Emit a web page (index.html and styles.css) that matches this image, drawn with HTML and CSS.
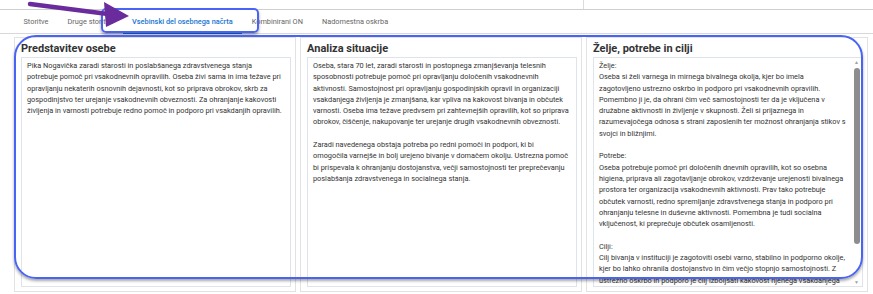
FILE: index.html
```html
<!DOCTYPE html>
<html lang="sl">
  <head>
    <meta charset="UTF-8" />
    <title>Osebni načrt</title>
    <link rel="stylesheet" href="styles.css">
  </head>
  <body>
    <div class="top-strip">
      <div class="cell"></div>
      <div class="cell"></div>
    </div>

    <!-- zavihki -->
    <nav class="tabs">
      <span class="tab">Storitve</span>
      <span class="tab">Druge storitve</span>
      <span class="tab active">Vsebinski del osebnega načrta</span>
      <span class="tab">Kombinirani ON</span>
      <span class="tab">Nadomestna oskrba</span>
    </nav>

    <main class="panels">
      <section class="card">
        <h2>Predstavitev osebe</h2>
        <div class="box">
          <div class="text">Pika Nogavička zaradi starosti in poslabšanega zdravstvenega stanja potrebuje pomoč pri vsakodnevnih opravilih. Oseba živi sama in ima težave pri opravljanju nekaterih osnovnih dejavnosti, kot so priprava obrokov, skrb za gospodinjstvo ter urejanje vsakodnevnih obveznosti. Za ohranjanje kakovosti življenja in varnosti potrebuje redno pomoč in podporo pri vsakdanjih opravilih.</div>
        </div>
      </section>

      <section class="card">
        <h2>Analiza situacije</h2>
        <div class="box">
          <div class="text">Oseba, stara 70 let, zaradi starosti in postopnega zmanjševanja telesnih sposobnosti potrebuje pomoč pri opravljanju določenih vsakodnevnih aktivnosti. Samostojnost pri opravljanju gospodinjskih opravil in organizaciji vsakdanjega življenja je zmanjšana, kar vpliva na kakovost bivanja in občutek varnosti. Oseba ima težave predvsem pri zahtevnejših opravilih, kot so priprava obrokov, čiščenje, nakupovanje ter urejanje drugih vsakodnevnih obveznosti.

Zaradi navedenega obstaja potreba po redni pomoči in podpori, ki bi omogočila varnejše in bolj urejeno bivanje v domačem okolju. Ustrezna pomoč bi prispevala k ohranjanju dostojanstva, večji samostojnosti ter preprečevanju poslabšanja zdravstvenega in socialnega stanja.</div>
        </div>
      </section>

      <section class="card">
        <h2>Želje, potrebe in cilji</h2>
        <div class="box scroll">
          <div class="text">Želje:
Oseba si želi varnega in mirnega bivalnega okolja, kjer bo imela zagotovljeno ustrezno oskrbo in podporo pri vsakodnevnih opravilih. Pomembno ji je, da ohrani čim več samostojnosti ter da je vključena v družabne aktivnosti in življenje v skupnosti. Želi si prijaznega in razumevajočega odnosa s strani zaposlenih ter možnost ohranjanja stikov s svojci in bližnjimi.

Potrebe:
Oseba potrebuje pomoč pri določenih dnevnih opravilih, kot so osebna higiena, priprava ali zagotavljanje obrokov, vzdrževanje urejenosti bivalnega prostora ter organizacija vsakodnevnih aktivnosti. Prav tako potrebuje občutek varnosti, redno spremljanje zdravstvenega stanja in podporo pri ohranjanju telesne in duševne aktivnosti. Pomembna je tudi socialna vključenost, ki preprečuje občutek osamljenosti.

Cilji:
Cilj bivanja v instituciji je zagotoviti osebi varno, stabilno in podporno okolje, kjer bo lahko ohranila dostojanstvo in čim večjo stopnjo samostojnosti. Z ustrezno oskrbo in podporo je cilj izboljšati kakovost njenega vsakdanjega življenja ter ji omogočiti varno in prijetno bivanje.</div>
          <div class="scrollbar">
            <span class="arrow-btn">&#9650;</span>
            <span class="thumb"></span>
            <span class="arrow-btn">&#9660;</span>
          </div>
        </div>
      </section>
    </main>

    <!-- oznake na zaslonski sliki -->
    <div class="mark mark-tab"></div>
    <div class="mark mark-panels"></div>
    <svg class="pointer" width="140" height="32" viewBox="0 0 140 32">
      <line x1="30" y1="4" x2="108" y2="14" stroke="#6a2c9c" stroke-width="4.5" stroke-linecap="round"/>
      <polygon points="104,2 129,16 106,27" fill="#6a2c9c"/>
    </svg>
  </body>
</html>
```

FILE: styles.css
```css
body {
  font-family: Roboto, "Liberation Sans", sans-serif;
  background-color: #fff;
  color: #333;
  margin: 0;
  padding: 0;
  overflow: hidden;
}

/* ----------- vrstica na vrhu ----------- */
.top-strip {
  display: grid;
  grid-template-columns: 583px 1fr;
  height: 9px;
  border-bottom: 1px solid #cfcfcf;
}
.top-strip .cell + .cell {
  border-left: 1px solid #dcdcdc;
}

/* ----------- zavihki ----------- */
.tabs {
  display: flex;
  align-items: stretch;
  height: 23px;
  padding-left: 14px;
  border-bottom: 1px solid #d8d8d8;
}
.tab {
  display: flex;
  align-items: center;
  padding: 0 9.5px;
  font-size: 7.35px;
  color: #666;
  border-bottom: 2px solid transparent;
  margin-bottom: -1px;
}
.tab.active {
  color: #1976d2;
  font-weight: 500;
  border-bottom-color: #1976d2;
}

/* ----------- stolpci ----------- */
.panels {
  display: grid;
  grid-template-columns: repeat(3, 1fr);
  gap: 4px;
  padding: 3px 5px 0 14px;
}
.card {
  border: 1px solid #e2e2e2;
  padding: 0 4px 4px 6px;
  min-width: 0;
}
.card h2 {
  margin: 4px 0 2px 0;
  font-size: 11px;
  line-height: 13px;
  font-weight: bold;
  color: #333;
}
.box {
  height: 228px;
  border: 1px solid #dfe4ec;
  overflow: hidden;
  display: flex;
}
.text {
  flex-grow: 1;
  padding: 2px 7px 2px 5px;
  font-size: 7.35px;
  line-height: 11.3px;
  color: #333;
  white-space: pre-wrap;
}
.scroll .text {
  padding-right: 4px;
}

.scrollbar {
  flex-shrink: 0;
  width: 11px;
  display: flex;
  flex-direction: column;
  align-items: center;
}
.arrow-btn {
  font-size: 5px;
  line-height: 8px;
  color: #a0a0a0;
}
.thumb {
  width: 6px;
  flex-grow: 1;
  margin: 2px 0 34px 0;
  background-color: #8d8d8d;
  border-radius: 3px;
}

/* ----------- oznake ----------- */
.mark {
  position: absolute;
  border: 2px solid #4964f4;
  box-shadow: 0 2px 3px rgba(0, 0, 0, 0.35);
  box-sizing: border-box;
}
.mark-tab {
  left: 101px;
  top: 8px;
  width: 158px;
  height: 25px;
  border-radius: 5px;
}
.mark-panels {
  left: 14px;
  top: 35px;
  width: 849px;
  height: 244px;
  border-radius: 22px;
}
.pointer {
  position: absolute;
  left: 0;
  top: 0;
}
```
